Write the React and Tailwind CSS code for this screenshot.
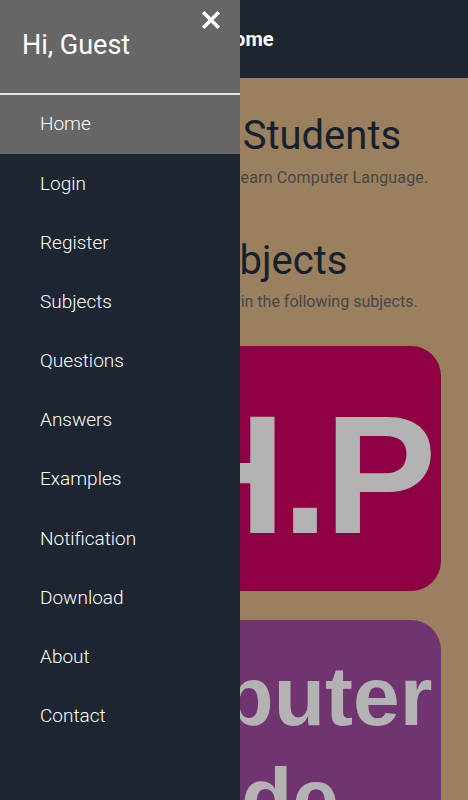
import React from "react";

const menu = [
  "Home",
  "Login",
  "Register",
  "Subjects",
  "Questions",
  "Answers",
  "Examples",
  "Notification",
  "Download",
  "About",
  "Contact",
];

function CloseIcon() {
  return (
    <svg width="18" height="18" viewBox="0 0 18 18" className="block">
      <path d="M2.5 2.5 L15.5 15.5 M15.5 2.5 L2.5 15.5" stroke="#ffffff" strokeWidth="3.6" strokeLinecap="square" />
    </svg>
  );
}

export default function App() {
  return (
    <div className="relative w-[468px] h-[800px] overflow-hidden font-['Roboto',sans-serif]">
      {/* page behind the drawer */}
      <div className="flex flex-col h-full">
        <header className="h-[78px] shrink-0 bg-[#1d2530] flex items-center pl-[220px]">
          <span className="text-white text-[20px] font-bold">Home</span>
        </header>

        <main className="flex-1 bg-[#9a805f] flex flex-col items-center pt-[34px]">
          <h1 className="text-[40px] leading-[48px] text-[#17212d]">Welcome Students</h1>
          <p className="mt-[6px] text-[16px] leading-[24px] tracking-[0.15px] text-[#45474a]">
            Here is the best website to learn Computer Language.
          </p>

          <h2 className="mt-[47px] text-[40px] leading-[48px] text-[#17212d]">Our Subjects</h2>
          <p className="mt-[5px] text-[16px] leading-[24px] text-[#45474a]">
            Choose your favorite topic in the following subjects.
          </p>

          <div className="mt-[32px] w-full px-[27px] flex flex-col gap-[29px]">
            <div className="h-[245px] rounded-[30px] bg-[#8e0043] flex items-center justify-center">
              <span className="text-[#b3b3b3] font-['Liberation_Sans',sans-serif] font-bold text-[168px] leading-none tracking-[-4px] pt-[12px]">
                P.H.P
              </span>
            </div>
            <div className="h-[245px] rounded-[30px] bg-[#703571] flex flex-col items-center pt-[25px]">
              <span className="text-[#b3b3b3] font-['Liberation_Sans',sans-serif] font-bold text-[84px] leading-[102px] text-center">
                Computer
                <br />
                Code
              </span>
            </div>
          </div>
        </main>
      </div>

      {/* drawer */}
      <aside className="absolute top-0 left-0 w-[240px] h-full bg-[#1d2530] flex flex-col">
        <div className="relative h-[93px] bg-[#666666] shrink-0 pl-[22px] pt-[28px]">
          <div className="text-white text-[27px] leading-[34px]">Hi, Guest</div>
          <button className="absolute top-[11px] right-[20px]">
            <CloseIcon />
          </button>
        </div>
        <div className="h-[2px] bg-[#e6e6e6] shrink-0" />
        <nav className="flex flex-col">
          {menu.map((item, i) => (
            <a
              key={item}
              className={`h-[59.2px] flex items-center pl-[40px] text-[19px] font-light text-white ${
                i === 0 ? "bg-[#666666]" : ""
              }`}
            >
              {item}
            </a>
          ))}
        </nav>
      </aside>
    </div>
  );
}
